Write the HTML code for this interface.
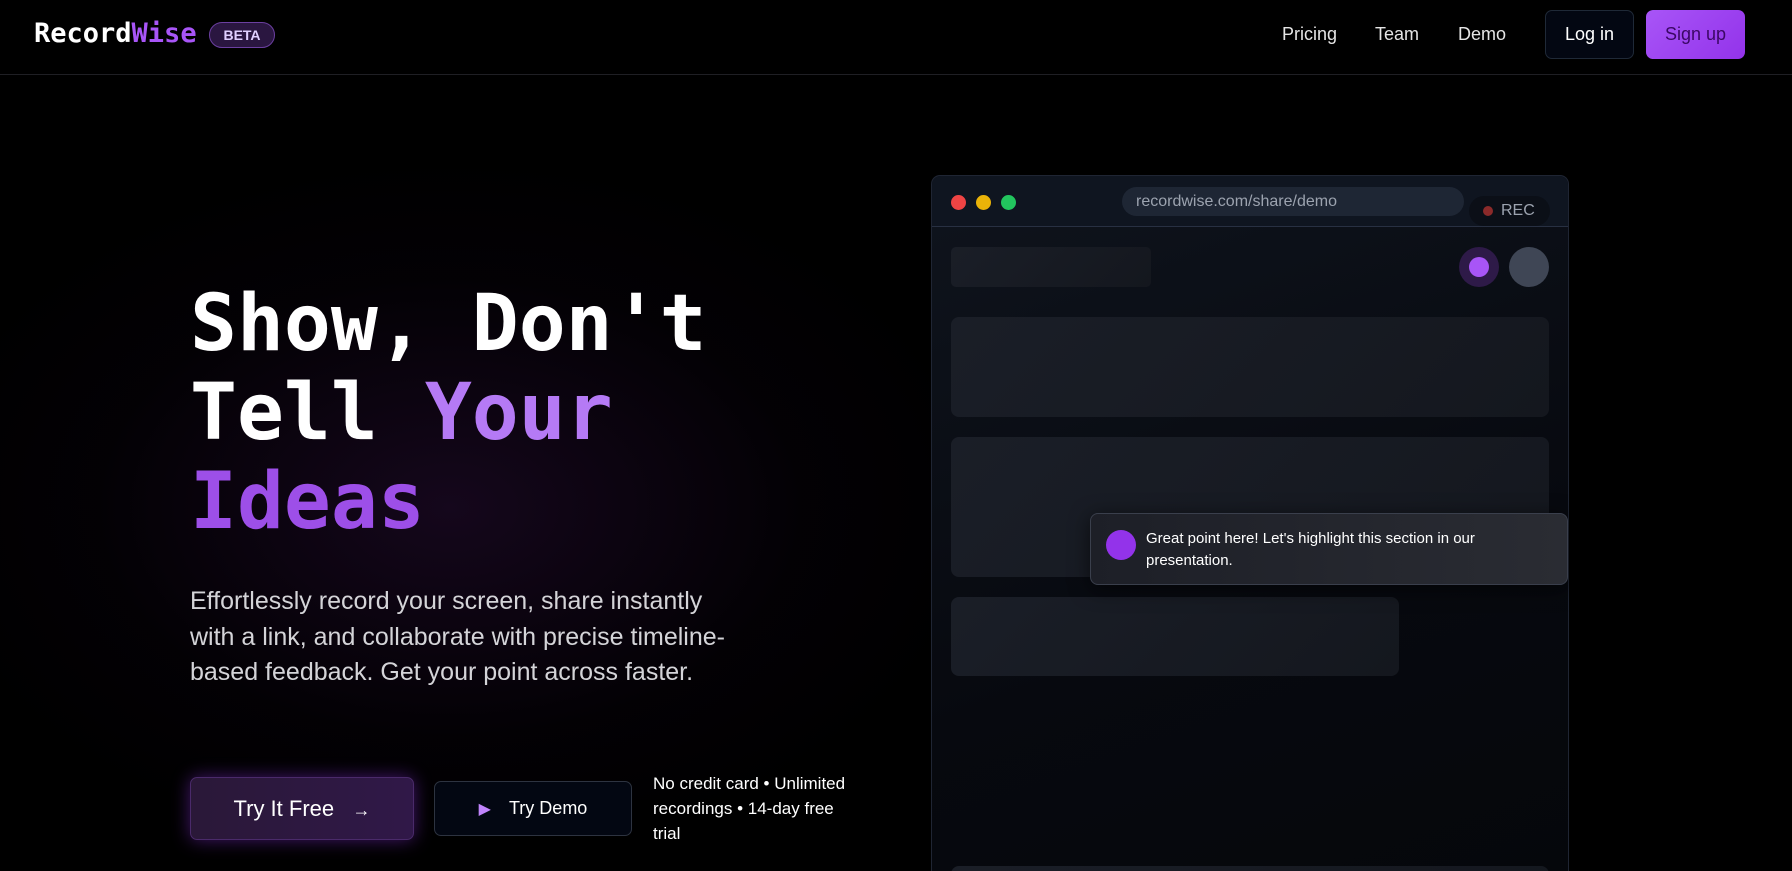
<!DOCTYPE html>
<html style="height:871px;overflow:hidden"><head><meta charset="utf-8"><style>
*{margin:0;padding:0;box-sizing:border-box}
body{width:1792px;height:871px;overflow:hidden;background:#000;font-family:"Liberation Sans",sans-serif;color:#fff;position:relative}
#root{position:absolute;left:0;top:0;width:1792px;height:871px;overflow:hidden}
.glow{position:absolute;left:0;top:150px;width:1000px;height:650px;background:radial-gradient(ellipse at 45% 55%,rgba(60,20,80,0.35),rgba(20,5,30,0.15) 45%,transparent 70%)}
.nav{position:absolute;left:0;top:0;width:1792px;height:75px;border-bottom:1px solid #1f1f24}
.logo{position:absolute;left:34px;top:18px;font-family:"DejaVu Sans Mono",monospace;font-weight:bold;font-size:27px}
.logo span{color:#a855f7}
.beta{position:absolute;left:209px;top:22px;width:66px;height:26px;border:1px solid #6b3fa0;background:#2a1640;border-radius:13px;font-size:14px;font-weight:bold;color:#e0cfff;text-align:center;line-height:24px}
.nl{position:absolute;top:24px;font-size:18px;color:#e5e5e5}
.btn{position:absolute;border-radius:7px;text-align:center;font-size:18px}
h1{position:absolute;left:190px;top:280px;font-family:"DejaVu Sans Mono",monospace;font-weight:bold;font-size:78px;line-height:89px;letter-spacing:0}
.p{position:absolute;left:190px;top:584px;width:556px;font-size:25px;line-height:35.5px;color:#d4d4d8}
.win{position:absolute;left:931px;top:175px;width:638px;height:696px;border:1px solid #1f2533;border-bottom:none;border-radius:9px 9px 0 0;background:linear-gradient(160deg,#0f141d,#07090f 60%,#05070b);overflow:hidden}
.hdr{position:absolute;left:0;top:0;width:100%;height:51px;border-bottom:1px solid #283042;background:#0f1520;border-radius:9px 9px 0 0}
.dot{position:absolute;top:19px;width:15px;height:15px;border-radius:50%}
.card{position:absolute;background:linear-gradient(135deg,#1a1e27,#14171e);border-radius:8px}
</style></head><body><div id="root">
<div class="glow"></div>
<div class="nav">
<div class="logo">Record<span>Wise</span></div>
<div class="beta">BETA</div>
<div class="nl" style="left:1282px">Pricing</div>
<div class="nl" style="left:1375px">Team</div>
<div class="nl" style="left:1458px">Demo</div>
<div class="btn" style="left:1545px;top:10px;width:89px;height:49px;line-height:47px;border:1px solid #1f2937;background:#030712;color:#fff">Log in</div>
<div class="btn" style="left:1646px;top:10px;width:99px;height:49px;line-height:49px;background:linear-gradient(135deg,#a855f7,#9333ea);color:#3b0764">Sign up</div>
</div>
<h1>Show, Don't<br>Tell <span style="color:#b57af5">Your</span><br><span style="color:#9d4fe8">Ideas</span></h1>
<div class="p">Effortlessly record your screen, share instantly<br>with a link, and collaborate with precise timeline-<br>based feedback. Get your point across faster.</div>
<div class="btn" style="left:190px;top:777px;width:224px;height:63px;line-height:61px;border:1px solid #4a2a6a;background:linear-gradient(90deg,#2a1838,#301848);box-shadow:0 0 18px rgba(147,51,234,0.45);font-size:22px">Try It Free &nbsp;&nbsp;<span style="font-size:18px">→</span></div>
<div class="btn" style="left:434px;top:781px;width:198px;height:55px;line-height:53px;border:1px solid #2d3340;background:#030712;font-size:18px"><span style="color:#c084fc;font-size:16px;margin-right:18px">▶</span>Try Demo</div>
<div style="position:absolute;left:653px;top:771px;width:200px;font-size:17px;line-height:25px">No credit card • Unlimited recordings • 14-day free trial</div>
<div class="win">
<div class="hdr">
<div class="dot" style="left:19px;background:#ef4444"></div>
<div class="dot" style="left:44px;background:#eab308"></div>
<div class="dot" style="left:69px;background:#22c55e"></div>
<div style="position:absolute;left:190px;top:11px;width:342px;height:29px;border-radius:15px;background:#1e2634;color:#9ca3af;font-size:16px;line-height:29px;padding-left:14px">recordwise.com/share/demo</div>
<div style="position:absolute;left:537px;top:20px;width:81px;height:30px;border-radius:15px;background:#0b0f17;color:#9ca3af;font-size:16px;line-height:30px;padding-left:32px"><span style="position:absolute;left:14px;top:10px;width:10px;height:10px;border-radius:50%;background:#8b2a2a"></span>REC</div>
</div>
<div class="card" style="left:19px;top:71px;width:200px;height:40px;border-radius:5px"></div>
<div style="position:absolute;left:527px;top:71px;width:40px;height:40px;border-radius:50%;background:#2e1a48"><div style="margin:10px;width:20px;height:20px;border-radius:50%;background:#a855f7"></div></div>
<div style="position:absolute;left:577px;top:71px;width:40px;height:40px;border-radius:50%;background:#3f4655"></div>
<div class="card" style="left:19px;top:141px;width:598px;height:100px"></div>
<div class="card" style="left:19px;top:261px;width:598px;height:140px"></div>
<div class="card" style="left:19px;top:421px;width:448px;height:79px"></div>
<div class="card" style="left:19px;top:690px;width:598px;height:40px"></div>
</div>
<div style="position:absolute;left:1090px;top:513px;width:478px;height:72px;border:1px solid #3a3f4c;border-radius:8px;background:linear-gradient(90deg,#1d1f27,#2a2c33);box-shadow:0 4px 20px rgba(0,0,0,0.6)">
<div style="position:absolute;left:15px;top:16px;width:30px;height:30px;border-radius:50%;background:#9333ea"></div>
<div style="position:absolute;left:55px;top:14px;width:360px;font-size:15px;line-height:22px;color:#fff">Great point here! Let's highlight this section in our presentation.</div>
</div>
</div></body></html>
